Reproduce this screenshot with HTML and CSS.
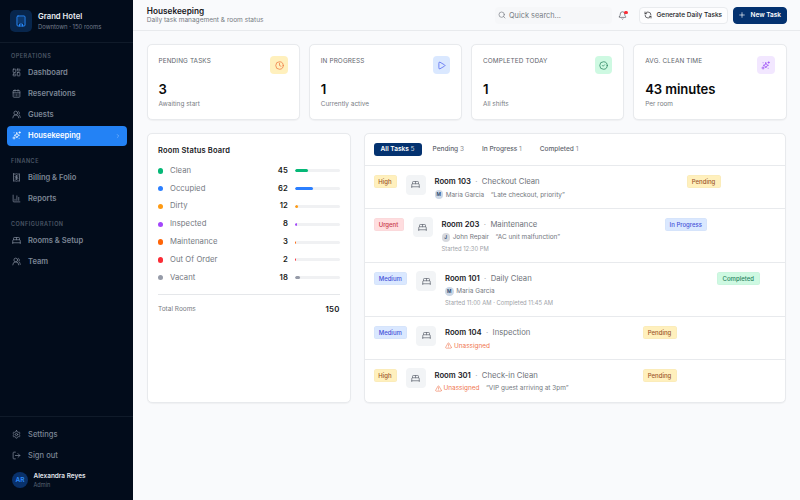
FILE: index.html
```
<!DOCTYPE html>
<html lang="en">
<head>
<meta charset="utf-8">
<title>Housekeeping</title>
<link rel="stylesheet" href="styles.css">
</head>
<body>
<svg class="defs" xmlns="http://www.w3.org/2000/svg">
<symbol id="building" viewBox="0 0 24 24"><rect x="4" y="2" width="16" height="20" rx="2"/><path d="M9 22v-4h6v4M8 6h.01M16 6h.01M12 6h.01M12 10h.01M12 14h.01M16 10h.01M16 14h.01M8 10h.01M8 14h.01"/></symbol>
<symbol id="dash" viewBox="0 0 24 24"><rect x="3" y="3" width="7" height="9" rx="1"/><rect x="14" y="3" width="7" height="5" rx="1"/><rect x="14" y="12" width="7" height="9" rx="1"/><rect x="3" y="16" width="7" height="5" rx="1"/></symbol>
<symbol id="cal" viewBox="0 0 24 24"><path d="M8 2v4M16 2v4M3 10h18M8 14h.01M12 14h.01M16 14h.01M8 18h.01M12 18h.01M16 18h.01"/><rect x="3" y="4" width="18" height="18" rx="2"/></symbol>
<symbol id="users" viewBox="0 0 24 24"><path d="M18 21a8 8 0 0 0-16 0"/><circle cx="10" cy="8" r="5"/><path d="M22 20c0-3.37-2-6.5-4-8a5 5 0 0 0-.45-8.3"/></symbol>
<symbol id="sparkles" viewBox="0 0 24 24"><path d="M13 4.500 15 9.500 20 11.500 15 13.500 13 18.500 11 13.500 6 11.500 11 9.500z"/><path d="M5.500 15.500v6M2.500 18.500h6M20.500 2v4M18.500 4h4M5.500 4.500h.01M19 19.500h.01"/></symbol>
<symbol id="chev" viewBox="0 0 24 24"><path d="m9 18 6-6-6-6"/></symbol>
<symbol id="bill" viewBox="0 0 24 24"><path d="M4 2v20l2-1 2 1 2-1 2 1 2-1 2 1 2-1 2 1V2l-2 1-2-1-2 1-2-1-2 1-2-1-2 1Z"/><path d="M16 8h-6a2 2 0 1 0 0 4h4a2 2 0 1 1 0 4H8M12 17.500v-11"/></symbol>
<symbol id="chart" viewBox="0 0 24 24"><path d="M3 3v16a2 2 0 0 0 2 2h16M18 17V9M13 17V5M8 17v-3"/></symbol>
<symbol id="bed" viewBox="0 0 24 24"><path d="M2 20v-8a2 2 0 0 1 2-2h16a2 2 0 0 1 2 2v8M4 10V6a2 2 0 0 1 2-2h12a2 2 0 0 1 2 2v4M12 4v6M2 18h20"/></symbol>
<symbol id="gear" viewBox="0 0 24 24"><path d="M12.220 2h-.44a2 2 0 0 0-2 2v.18a2 2 0 0 1-1 1.730l-.43.25a2 2 0 0 1-2 0l-.15-.08a2 2 0 0 0-2.730.73l-.22.38a2 2 0 0 0 .73 2.730l.15.1a2 2 0 0 1 1 1.720v.51a2 2 0 0 1-1 1.740l-.15.09a2 2 0 0 0-.73 2.730l.22.38a2 2 0 0 0 2.730.73l.15-.08a2 2 0 0 1 2 0l.43.25a2 2 0 0 1 1 1.730V20a2 2 0 0 0 2 2h.44a2 2 0 0 0 2-2v-.18a2 2 0 0 1 1-1.730l.43-.25a2 2 0 0 1 2 0l.15.08a2 2 0 0 0 2.730-.73l.22-.39a2 2 0 0 0-.73-2.730l-.15-.08a2 2 0 0 1-1-1.740v-.5a2 2 0 0 1 1-1.740l.15-.09a2 2 0 0 0 .73-2.730l-.22-.38a2 2 0 0 0-2.730-.73l-.15.08a2 2 0 0 1-2 0l-.43-.25a2 2 0 0 1-1-1.730V4a2 2 0 0 0-2-2z"/><circle cx="12" cy="12" r="3"/></symbol>
<symbol id="logout" viewBox="0 0 24 24"><path d="M9 21H5a2 2 0 0 1-2-2V5a2 2 0 0 1 2-2h4M16 17l5-5-5-5M21 12H9"/></symbol>
<symbol id="search" viewBox="0 0 24 24"><circle cx="11" cy="11" r="8"/><path d="m21 21-4.300-4.300"/></symbol>
<symbol id="bell" viewBox="0 0 24 24"><path d="M10.270 21a2 2 0 0 0 3.460 0M3.260 15.330A1 1 0 0 0 4 17h16a1 1 0 0 0 .74-1.670C19.410 13.960 18 12.500 18 8A6 6 0 0 0 6 8c0 4.500-1.410 5.960-2.740 7.330z"/></symbol>
<symbol id="refresh" viewBox="0 0 24 24"><path d="M21 12a9 9 0 0 0-9-9 9.750 9.750 0 0 0-6.740 2.740L3 8M3 3v5h5M3 12a9 9 0 0 0 9 9 9.750 9.750 0 0 0 6.740-2.740L21 16M16 16h5v5"/></symbol>
<symbol id="plus" viewBox="0 0 24 24"><path d="M5 12h14M12 5v14"/></symbol>
<symbol id="clock" viewBox="0 0 24 24"><circle cx="12" cy="12" r="10"/><path d="M12 6v6l4 2"/></symbol>
<symbol id="play" viewBox="0 0 24 24"><path d="M5 5a2 2 0 0 1 3-1.730l12 7a2 2 0 0 1 0 3.460l-12 7A2 2 0 0 1 5 19z"/></symbol>
<symbol id="check" viewBox="0 0 24 24"><circle cx="12" cy="12" r="10"/><path d="m9 12 2 2 4-4"/></symbol>
<symbol id="warn" viewBox="0 0 24 24"><path d="m21.730 18-8-14a2 2 0 0 0-3.480 0l-8 14A2 2 0 0 0 4 21h16a2 2 0 0 0 1.730-3M12 9v4M12 17h.01"/></symbol>
</svg>
<div class="app">
<aside class="sidebar">
  <div class="brand"><span class="logo"><svg><use href="#building"/></svg></span><div><div class="brand-name">Grand Hotel</div><div class="brand-sub">Downtown · 150 rooms</div></div></div>
  <nav class="nav">
    <h6>OPERATIONS</h6>
    <a><svg><use href="#dash"/></svg>Dashboard</a>
    <a><svg><use href="#cal"/></svg>Reservations</a>
    <a><svg><use href="#users"/></svg>Guests</a>
    <a class="active"><svg><use href="#sparkles"/></svg>Housekeeping<svg class="chev"><use href="#chev"/></svg></a>
    <h6>FINANCE</h6>
    <a><svg><use href="#bill"/></svg>Billing &amp; Folio</a>
    <a><svg><use href="#chart"/></svg>Reports</a>
    <h6>CONFIGURATION</h6>
    <a><svg><use href="#bed"/></svg>Rooms &amp; Setup</a>
    <a><svg><use href="#users"/></svg>Team</a>
  </nav>
  <div class="side-foot">
    <a><svg><use href="#gear"/></svg>Settings</a>
    <a><svg><use href="#logout"/></svg>Sign out</a>
    <div class="user"><span class="avatar">AR</span><div><div class="user-name">Alexandra Reyes</div><div class="user-role">Admin</div></div></div>
  </div>
</aside>
<div class="page">
  <header class="topbar">
    <div class="heading"><h1>Housekeeping</h1><p>Daily task management &amp; room status</p></div>
    <div class="search"><svg><use href="#search"/></svg>Quick search...</div>
    <span class="bell"><svg><use href="#bell"/></svg><i></i></span>
    <button class="btn"><svg><use href="#refresh"/></svg>Generate Daily Tasks</button>
    <button class="btn primary"><svg><use href="#plus"/></svg>New Task</button>
  </header>
  <main>
    <section class="stats">
      <div class="card stat"><div class="stat-top"><span>PENDING TASKS</span><b class="tile amber"><svg><use href="#clock"/></svg></b></div><strong>3</strong><small>Awaiting start</small></div>
      <div class="card stat"><div class="stat-top"><span>IN PROGRESS</span><b class="tile blue"><svg><use href="#play"/></svg></b></div><strong>1</strong><small>Currently active</small></div>
      <div class="card stat"><div class="stat-top"><span>COMPLETED TODAY</span><b class="tile green"><svg><use href="#check"/></svg></b></div><strong>1</strong><small>All shifts</small></div>
      <div class="card stat"><div class="stat-top"><span>AVG. CLEAN TIME</span><b class="tile purple"><svg><use href="#sparkles"/></svg></b></div><strong>43 minutes</strong><small>Per room</small></div>
    </section>
    <section class="lower">
      <div class="card board">
        <h2>Room Status Board</h2>
        <div class="status c-green"><i></i><span>Clean</span><b>45</b><div class="bar"><div style="width:30%"></div></div></div>
        <div class="status c-blue"><i></i><span>Occupied</span><b>62</b><div class="bar"><div style="width:41%"></div></div></div>
        <div class="status c-amber"><i></i><span>Dirty</span><b>12</b><div class="bar"><div style="width:8%"></div></div></div>
        <div class="status c-purple"><i></i><span>Inspected</span><b>8</b><div class="bar"><div style="width:5%"></div></div></div>
        <div class="status c-orange"><i></i><span>Maintenance</span><b>3</b><div class="bar"><div style="width:2%"></div></div></div>
        <div class="status c-red"><i></i><span>Out Of Order</span><b>2</b><div class="bar"><div style="width:1.3%"></div></div></div>
        <div class="status c-gray"><i></i><span>Vacant</span><b>18</b><div class="bar"><div style="width:12%"></div></div></div>
        <div class="total"><span>Total Rooms</span><b>150</b></div>
      </div>
      <div class="card tasks">
        <div class="tabs"><span class="tab on">All Tasks <em>5</em></span><span class="tab">Pending <em>3</em></span><span class="tab">In Progress <em>1</em></span><span class="tab">Completed <em>1</em></span></div>
        <div class="task"><span class="badge amber high">High</span><span class="bed"><svg><use href="#bed"/></svg></span>
          <div class="info"><div class="title"><b>Room 103</b><i>·</i>Checkout Clean</div><div class="meta"><span class="mini">M</span>Maria Garcia<q>Late checkout, priority</q></div></div>
          <span class="badge amber pending">Pending</span><span class="actions w56"></span></div>
        <div class="task tall"><span class="badge red urgent">Urgent</span><span class="bed"><svg><use href="#bed"/></svg></span>
          <div class="info"><div class="title"><b>Room 203</b><i>·</i>Maintenance</div><div class="meta"><span class="mini grey">J</span>John Repair<q>AC unit malfunction</q></div><div class="time">Started 12:30 PM</div></div>
          <span class="badge blue wide">In Progress</span><span class="actions w69"></span></div>
        <div class="task tall"><span class="badge blue medium">Medium</span><span class="bed"><svg><use href="#bed"/></svg></span>
          <div class="info"><div class="title"><b>Room 101</b><i>·</i>Daily Clean</div><div class="meta"><span class="mini">M</span>Maria Garcia</div><div class="time">Started 11:00 AM · Completed 11:45 AM</div></div>
          <span class="badge green wide">Completed</span><span class="actions w16"></span></div>
        <div class="task"><span class="badge blue medium">Medium</span><span class="bed"><svg><use href="#bed"/></svg></span>
          <div class="info"><div class="title"><b>Room 104</b><i>·</i>Inspection</div><div class="meta"><span class="un"><svg><use href="#warn"/></svg>Unassigned</span></div></div>
          <span class="badge amber pending">Pending</span><span class="actions w99"></span></div>
        <div class="task"><span class="badge amber high">High</span><span class="bed"><svg><use href="#bed"/></svg></span>
          <div class="info"><div class="title"><b>Room 301</b><i>·</i>Check-in Clean</div><div class="meta"><span class="un"><svg><use href="#warn"/></svg>Unassigned</span><q>VIP guest arriving at 3pm</q></div></div>
          <span class="badge amber pending">Pending</span><span class="actions w99"></span></div>
      </div>
    </section>
  </main>
</div>
</div>
</body>
</html>
```
FILE: styles.css
```
* { box-sizing: border-box; margin: 0; padding: 0; }
body { width: 800px; height: 500px; overflow: hidden; font-family: Inter, "Liberation Sans", sans-serif; font-size: 7.5px; line-height: 10px; color: #18191c; background: #f9fafc; }
.defs { display: none; }
svg { width: 9px; height: 9px; fill: none; stroke: currentColor; stroke-width: 2; stroke-linecap: round; stroke-linejoin: round; flex: none; display: block; }
.app { display: flex; height: 500px; }

.sidebar { width: 133px; flex: none; background: #020c1b; display: flex; flex-direction: column; color: #7c8695; }
.brand { height: 43px; display: flex; align-items: center; padding: 0 10px; gap: 6px; border-bottom: 1px solid #101b2a; }
.logo { width: 22px; height: 22px; border-radius: 5px; background: #08264c; color: #2787f7; display: grid; place-items: center; }
.logo svg { width: 12px; height: 12px; }
.brand-name { color: #e9edf2; font-weight: 600; font-size: 7.7px; line-height: 11px; }
.brand-sub { color: #747e8d; font-size: 5.900px; line-height: 9px; }
.nav { padding: 8px 6.500px 0; flex: 1; }
h6 { font-size: 5.5px; font-weight: 600; letter-spacing: .5px; line-height: 10px; color: #4c5766; padding-left: 4.500px; margin-bottom: 1.500px; }
a + h6 { margin-top: 10.300px; }
.nav a, .side-foot a { display: flex; align-items: center; height: 20px; margin-bottom: 1px; padding: 0 5.500px; gap: 7px; font-size: 7.550px; line-height: 11px; font-weight: 600; border-radius: 4px; }
.nav a.active { background: #2382f5; color: #fff; margin-bottom: 0; }
.nav .chev { width: 6px; height: 6px; margin-left: auto; color: #9cc8ff; }
.side-foot { height: 84px; padding: 7px 6.500px 0; border-top: 1px solid #101b2a; }
.side-foot a { font-weight: 500; letter-spacing: .03px; }
.user { display: flex; align-items: center; gap: 5.500px; padding: 6px 5.500px; }
.avatar { width: 16px; height: 16px; border-radius: 50%; background: #09316a; color: #2f8cfa; font-size: 6.5px; font-weight: 600; text-align: center; line-height: 16px; }
.user-name { color: #e0e5eb; font-size: 6.450px; font-weight: 600; line-height: 8.500px; }
.user-role { color: #596475; font-size: 5.600px; line-height: 8px; }

.page { flex: 1; min-width: 0; display: flex; flex-direction: column; }
.topbar { height: 31px; border-bottom: 1px solid #e8eaed; display: flex; align-items: center; padding: 0 13.500px 0 13.800px; }
.heading { flex: 1; }
h1 { font-size: 8.250px; line-height: 10px; font-weight: 600; }
.heading p { font-size: 6.550px; line-height: 9px; color: #777b83; }
.search { width: 117px; height: 17px; margin-right: 6.500px; border-radius: 4px; background: #f6f7f9; display: flex; align-items: center; gap: 3.500px; padding-left: 3px; color: #777c84; font-size: 7.350px; line-height: 11px; }
.search svg, .btn svg { width: 8px; height: 8px; }
.bell { position: relative; margin-right: 11.500px; color: #62666e; }
.bell i { position: absolute; right: -.5px; top: 0; width: 3.500px; height: 3.500px; border-radius: 50%; background: #fb2c36; }
.btn { height: 17px; width: 89px; border: 1px solid #e9ebee; border-radius: 4px; background: #fdfdfe; color: #222326; font: 500 6.5px Inter, sans-serif; display: flex; align-items: center; justify-content: center; gap: 4.500px; white-space: nowrap; }
.btn.primary { width: 54px; margin-left: 5px; background: #043270; border-color: #043270; color: #fff; font-weight: 600; gap: 4.500px; }

main { padding: 13px 13.500px 0 13.500px; }
.card { background: #fff; border: 1px solid #e8eaed; border-radius: 5px; box-shadow: 0 .5px 1px #0000000a; }
.stats { display: grid; grid-template-columns: repeat(4, 1fr); gap: 9px; }
.stat { height: 76px; padding: 11px 11px 0; }
.stat-top { display: flex; justify-content: space-between; height: 26px; color: #62666d; font-size: 6.400px; letter-spacing: .12px; }
.tile { width: 17.500px; height: 18px; border-radius: 4px; display: grid; place-items: center; }
.stat strong { display: block; font-size: 13.100px; line-height: 15px; font-weight: 600; letter-spacing: -.1px; color: #08090a; }
.stat small { display: block; font-size: 6.450px; line-height: 10px; margin-top: 2px; color: #797d84; }
.amber { background: #fff0bd; color: #ed7a43; }
.blue { background: #dae8ff; color: #5063ef; }
.green { background: #cef9e2; color: #27835d; }
.purple { background: #f2e7ff; color: #9849f5; }
.red { background: #ffdddf; color: #c83748; }

.lower { display: grid; grid-template-columns: 204.500px 422px; gap: 13px; margin-top: 13px; height: 269.500px; }
.board { padding: 11px 10.500px 0; }
h2 { font-size: 7.5px; line-height: 12px; font-weight: 600; margin-bottom: 5px; letter-spacing: .18px; }
.status { display: flex; align-items: center; height: 17.800px; color: #74787f; font-size: 7.7px; letter-spacing: .06px; }
.status i { width: 5.300px; height: 5.300px; border-radius: 50%; background: var(--c); margin-right: 6.700px; }
.status span { flex: 1; }
.status b { font-weight: 600; color: #1b1d20; margin-right: 6.500px; letter-spacing: .15px; }
.bar { width: 45px; height: 3px; border-radius: 2px; background: #f0f1f3; overflow: hidden; }
.bar div { height: 3px; border-radius: 2px; background: var(--c); }
.c-green { --c: #05b877; } .c-blue { --c: #2b7fff; } .c-amber { --c: #fe9a13; } .c-purple { --c: #a346fb; } .c-orange { --c: #ff6508; } .c-red { --c: #fb2c36; } .c-gray { --c: #969ba8; }
.total { border-top: 1px solid #e5e7ea; margin-top: 7px; padding-top: 9.500px; display: flex; justify-content: space-between; font-size: 6.500px; color: #777b82; }
.total b { color: #141518; font-size: 7.800px; font-weight: 600; letter-spacing: .2px; }

.tabs { height: 31px; display: flex; align-items: center; padding-left: 8.500px; gap: 4px; }
.tab { height: 13px; padding: 0 7px; font-size: 6.550px; line-height: 13px; font-weight: 500; color: #62666e; border-radius: 3px; }
.tab em { font-style: normal; font-weight: 400; opacity: .75; }
.tab.on { background: #043270; color: #fff; font-weight: 600; }
.task { height: 42.800px; border-top: 1px solid #e8eaed; display: flex; align-items: flex-start; padding: 9px 9px 0 8.500px; }
.task.tall { height: 54.200px; }
.badge { height: 13px; border-radius: 2.500px; font-size: 6px; line-height: 13px; font-weight: 500; text-align: center; box-shadow: inset 0 0 0 .5px #00000008; flex: none; }
.badge.amber { color: #9c572b; }
.badge.blue { color: #4652d8; }
.high { width: 23px; } .urgent { width: 30px; } .medium { width: 33.500px; } .pending { width: 34px; } .wide { width: 42.500px; }
.bed { width: 20px; height: 20px; margin: -.5px 9px 0; border-radius: 4px; background: #f2f4f6; color: #686e78; display: grid; place-items: center; flex: none; }
.info { flex: 1; white-space: nowrap; }
.title { display: flex; font-size: 7.700px; line-height: 13px; color: #6e7279; }
.title b { font-weight: 600; color: #1a1b1f; }
.title i { width: 11px; text-align: center; font-style: normal; color: #a5a8ad; }
.meta { display: flex; align-items: center; height: 10px; margin-top: 1.500px; font-size: 6.450px; color: #747880; }
.meta q { margin-left: 6.500px; }
.mini { width: 8.500px; height: 8.500px; margin-right: 2.700px; border-radius: 50%; background: #cbd7e6; color: #243f69; font-size: 4.800px; font-weight: 600; text-align: center; line-height: 8.500px; }
.mini.grey { background: #d7d9de; }
.time { font-size: 5.850px; line-height: 8px; margin-top: 2.500px; color: #a0a3a8; }
.un { color: #ef7650; display: flex; gap: 2px; align-items: center; }
.un svg { width: 7px; height: 7px; }
.actions { flex: none; }
.w56 { width: 55.500px; } .w69 { width: 69px; } .w16 { width: 16.500px; } .w99 { width: 99.500px; }
```
